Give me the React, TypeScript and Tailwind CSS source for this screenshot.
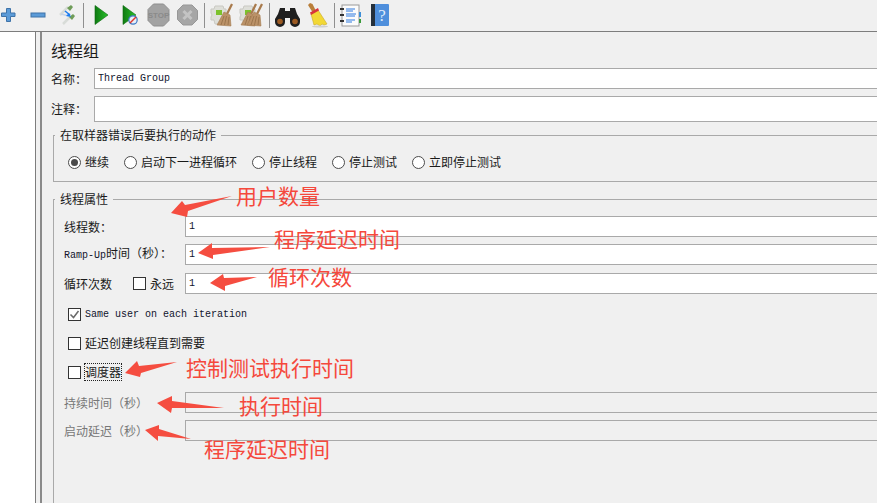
const cjk = "font-['Noto_Sans_CJK_SC',sans-serif] text-[12px] leading-[16px] text-[#1a1a1a]";
const mono = "font-['Liberation_Mono',monospace] text-[10px] text-[#10142c]";
const field = "h-[21px] flex-1 border border-[#a9a9a9] bg-white px-[3px] outline-none";

function Slot({ children }: { children: React.ReactNode }) {
  return (
    <svg width="29" height="30" viewBox="0 0 29 30" className="shrink-0">
      {children}
    </svg>
  );
}

function Sep({ className }: { className: string }) {
  return (
    <div className={`flex h-[30px] shrink-0 items-center justify-center ${className}`}>
      <div className="h-[25px] w-px bg-[#8f8f8f]" />
    </div>
  );
}

function Gear() {
  return (
    <g>
      <path d="M4 9h3l1-3h8l1 3h2v11h-2l-1 4H8l-1-4H4v-3l1-2-1-2z" fill="#dedfd9" stroke="#c9c9c3" />
      <rect x="9" y="10" width="6" height="5" fill="#7cc22c" />
    </g>
  );
}

function Broom({ x }: { x: number }) {
  return (
    <g transform={`translate(${x} 0)`}>
      <path d="M25 4 20 14" stroke="#a87a4c" strokeWidth="2.200" />
      <path d="M17 12l6 3 1 11-14-1z" fill="#bb9268" stroke="#a57c52" strokeWidth="0.600" />
      <path d="M17 16l-3 9M19.500 16l-2 9M22 17l-1 8" stroke="#8f6a44" strokeWidth="0.700" />
    </g>
  );
}

function Toolbar() {
  return (
    <div className="flex h-[32px] w-full shrink-0 items-start overflow-hidden border-b border-[#7d7d7d] bg-[#f0f0f0]">
      <div className="ml-[-6px] flex items-start">
        <Slot>
          <path d="M12.500 8.500h4v4.500h4.500v3.500h-4.500v5h-4v-5H7.500V13h5z" fill="#5b9bd8" stroke="#3f73a8" />
        </Slot>
        <Slot>
          <rect x="8" y="13" width="14" height="4" fill="#5b9bd8" stroke="#3f73a8" />
        </Slot>
        <Slot>
          <path d="M8 15l8-8" stroke="#d8dcd8" strokeWidth="2.500" />
          <path d="M15 8l4-3 2 2-3 4z" fill="#6f9c58" />
          <path d="M11 24l7-7" stroke="#d8dcd8" strokeWidth="2.500" />
          <path d="M17 17l4-3 2 2-3 4z" fill="#6f9c58" />
          <path d="M9 14l8 2" stroke="#c6d4e6" strokeWidth="1.500" />
          <path d="M13 11l5 4" stroke="#1e7ef0" strokeWidth="1.600" />
          <path d="M19 17l-5-1 3-3z" fill="#1e7ef0" />
        </Slot>
      </div>
      <Sep className="w-[5px]" />
      <Slot>
        <defs>
          <linearGradient id="play" x1="0" y1="0" x2="1" y2="0">
            <stop offset="0" stopColor="#0f7a12" />
            <stop offset="1" stopColor="#27c02a" />
          </linearGradient>
        </defs>
        <path d="M9 5.500l13 9.500-13 9.500z" fill="url(#play)" stroke="#0b6a0e" strokeWidth="0.600" />
      </Slot>
      <Slot>
        <path d="M8 5.500l13 9.500-13 9.500z" fill="url(#play)" stroke="#0b6a0e" strokeWidth="0.600" />
        <circle cx="18" cy="20" r="4.200" fill="#e6eef8" stroke="#3f78c4" strokeWidth="1.200" />
        <path d="M15 23l6-6" stroke="#e0352b" strokeWidth="1.400" />
      </Slot>
      <Slot>
        <path d="M9.500 4h10l5.500 5.500v11L19.500 26h-10L4 20.500v-11z" fill="#a2a2a2" stroke="#8e8e8e" />
        <text x="14.500" y="18" textAnchor="middle" fontSize="8" fontWeight="700" fill="#8a8a8a" fontFamily="Liberation Sans, sans-serif">STOP</text>
      </Slot>
      <Slot>
        <path d="M10 5h9l5.500 5.500v9L19 25h-9l-5.500-5.500v-9z" fill="#a6a6a6" stroke="#979797" />
        <path d="M10.500 11l8 8M18.500 11l-8 8" stroke="#c4c4c4" strokeWidth="3" />
      </Slot>
      <Sep className="w-[5px]" />
      <Slot>
        <Gear />
        <Broom x={0} />
      </Slot>
      <Slot>
        <Gear />
        <Broom x={-5} />
        <Broom x={1} />
      </Slot>
      <Sep className="w-[8px]" />
      <Slot>
        <path d="M7 8h5v3h5V8h5l2 6 3 5v3a5 5 0 0 1-10 0v-4h-5v4a5 5 0 0 1-10 0v-3l3-5z" fill="#1f1f1f" />
        <circle cx="7" cy="21.500" r="2.800" fill="#9c5a22" />
        <circle cx="22" cy="21.500" r="2.800" fill="#9c5a22" />
      </Slot>
      <Slot>
        <path d="M6 5l2-2 2.500 1 3.500 7-3 2z" fill="#b97f3a" />
        <path d="M9 14l7-4 9 14-3 1-2-1-2 2-3-2-3 1z" fill="#f2d835" stroke="#c9a92a" strokeWidth="0.600" />
        <path d="M8 12.500l8-4.500 1 2.500-8 4.500z" fill="#d8343c" />
        <ellipse cx="18" cy="26.500" rx="8" ry="1" fill="#cfcfcf" />
      </Slot>
      <Sep className="w-[6px]" />
      <Slot>
        <rect x="5" y="5" width="17" height="21" fill="#fbfbfb" stroke="#9a9a9a" />
        <path d="M9 9h9M9 11h7M9 14h10M9 16h9M9 20h9M9 22h6" stroke="#2e7ae0" strokeWidth="1" />
        <path d="M3 9h4M3 15h4M3 21h4" stroke="#333" strokeWidth="2" />
        <rect x="22" y="12" width="2" height="5" fill="#3f8fd8" />
        <rect x="22" y="19" width="2" height="4" fill="#3a9a3a" />
      </Slot>
      <Slot>
        <rect x="5" y="4" width="18" height="22" rx="1" fill="#4f8fdc" />
        <rect x="5" y="4" width="4" height="22" fill="#25303c" />
        <text x="16" y="21" textAnchor="middle" fontSize="17" fill="#dfeafa" fontFamily="Liberation Serif, serif">?</text>
      </Slot>
    </div>
  );
}

function Radio({ label, checked }: { label: string; checked?: boolean }) {
  return (
    <div className="flex items-center gap-[4px]">
      <div className="flex h-[13px] w-[13px] items-center justify-center rounded-full border border-[#4c4c4c] bg-white">
        {checked && <div className="h-[7px] w-[7px] rounded-full bg-[#4a4a4a]" />}
      </div>
      <span className={cjk}>{label}</span>
    </div>
  );
}

function Check({ checked }: { checked?: boolean }) {
  return (
    <div className="flex h-[13px] w-[13px] shrink-0 items-center justify-center border border-[#333] bg-white">
      {checked && (
        <svg width="11" height="11" viewBox="0 0 11 11">
          <path d="M1.500 5.500 4.500 8.500 9.500 2" fill="none" stroke="#6a6a6a" strokeWidth="1.500" />
        </svg>
      )}
    </div>
  );
}

const notes = [
  { text: "用户数量", left: "left-[236px]", top: "top-[181px]" },
  { text: "程序延迟时间", left: "left-[274px]", top: "top-[224px]" },
  { text: "循环次数", left: "left-[268px]", top: "top-[262px]" },
  { text: "控制测试执行时间", left: "left-[186px]", top: "top-[353px]" },
  { text: "执行时间", left: "left-[239px]", top: "top-[391px]" },
  { text: "程序延迟时间", left: "left-[204px]", top: "top-[434px]" },
];

const arrows = [
  "171,213 182,201 185,205 232,196 188,211 187,217",
  "198,253 212,243 212,248 270,247 213,255 213,259",
  "210,283 223,274 224,278 257,277 225,286 225,291",
  "125,373 137,361 139,366 177,362 141,373 140,377",
  "157,403 172,396 172,401 224,408 172,408 171,413",
  "145,430 159,425 159,429 191,439 158,436 158,441",
];

export default function App() {
  return (
    <div className="relative flex h-[503px] w-[877px] flex-col overflow-hidden bg-[#f0f0f0]">
      <Toolbar />
      <div className="flex min-h-0 flex-1">
        <div className="w-[36px] shrink-0 border-r border-[#7d7d7d] bg-white" />
        <div className="ml-[4px] w-[900px] shrink-0 border-l-2 border-[#8a8a8a] pl-[9px]">
          <h1 className="mt-[8px] font-['Noto_Sans_CJK_SC',sans-serif] text-[16px] leading-[20px] text-[#1a1a1a]">线程组</h1>
          <div className="mt-[8px] flex items-center">
            <span className={`${cjk} w-[43px]`}>名称：</span>
            <input readOnly value="Thread Group" className={`${field} ${mono}`} />
          </div>
          <div className="mt-[7px] flex items-center">
            <span className={`${cjk} w-[43px]`}>注释：</span>
            <div className="h-[26px] flex-1 border border-[#a9a9a9] bg-white" />
          </div>
          <fieldset className="mt-[5px] ml-[2px] h-[55px] border border-[#a9a9a9] pl-[14px]">
            <legend className={`${cjk} ml-[-13px] px-[5px]`}>在取样器错误后要执行的动作</legend>
            <div className="mt-[11px] flex gap-[15px]">
              <Radio label="继续" checked />
              <Radio label="启动下一进程循环" />
              <Radio label="停止线程" />
              <Radio label="停止测试" />
              <Radio label="立即停止测试" />
            </div>
          </fieldset>
          <fieldset className="mt-[9px] ml-[2px] h-[320px] border border-[#a9a9a9] pl-[10px]">
            <legend className={`${cjk} ml-[-9px] px-[5px]`}>线程属性</legend>
            <div className="mt-[9px] flex items-center">
              <span className={`${cjk} w-[121px]`}>线程数：</span>
              <input readOnly value="1" className={`${field} ${mono}`} />
            </div>
            <div className="mt-[7px] flex items-center">
              <span className={`${cjk} w-[121px] whitespace-nowrap`}>
                <span className={mono}>Ramp-Up</span>时间（秒）：
              </span>
              <input readOnly value="1" className={`${field} ${mono}`} />
            </div>
            <div className="mt-[8px] flex items-center">
              <span className={`${cjk} w-[69px]`}>循环次数</span>
              <Check />
              <span className={`${cjk} ml-[4px] w-[35px]`}>永远</span>
              <input readOnly value="1" className={`${field} ${mono}`} />
            </div>
            <div className="mt-[13px] ml-[4px] flex items-center gap-[4px]">
              <Check checked />
              <span className={mono}>Same user on each iteration</span>
            </div>
            <div className="mt-[13px] ml-[4px] flex items-center gap-[4px]">
              <Check />
              <span className={cjk}>延迟创建线程直到需要</span>
            </div>
            <div className="mt-[13px] ml-[4px] flex items-center gap-[4px]">
              <Check />
              <span className={`${cjk} outline-1 outline-dotted outline-[#222]`}>调度器</span>
            </div>
            <div className="mt-[12px] flex items-center">
              <span className={`${cjk} w-[121px] !text-[#777]`}>持续时间（秒）</span>
              <div className="h-[21px] flex-1 border border-[#a9a9a9]" />
            </div>
            <div className="mt-[7px] flex items-center">
              <span className={`${cjk} w-[121px] !text-[#777]`}>启动延迟（秒）</span>
              <div className="h-[21px] flex-1 border border-[#a9a9a9]" />
            </div>
          </fieldset>
        </div>
      </div>
      <svg width="877" height="503" viewBox="0 0 877 503" className="absolute top-0 left-0">
        {arrows.map((p) => (
          <polygon key={p} points={p} fill="#f54d40" />
        ))}
      </svg>
      {notes.map((n) => (
        <span
          key={n.text + n.top}
          className={`absolute ${n.left} ${n.top} whitespace-nowrap font-['Noto_Sans_CJK_SC',sans-serif] text-[21px] leading-[28px] text-[#f5483c]`}
        >
          {n.text}
        </span>
      ))}
    </div>
  );
}
